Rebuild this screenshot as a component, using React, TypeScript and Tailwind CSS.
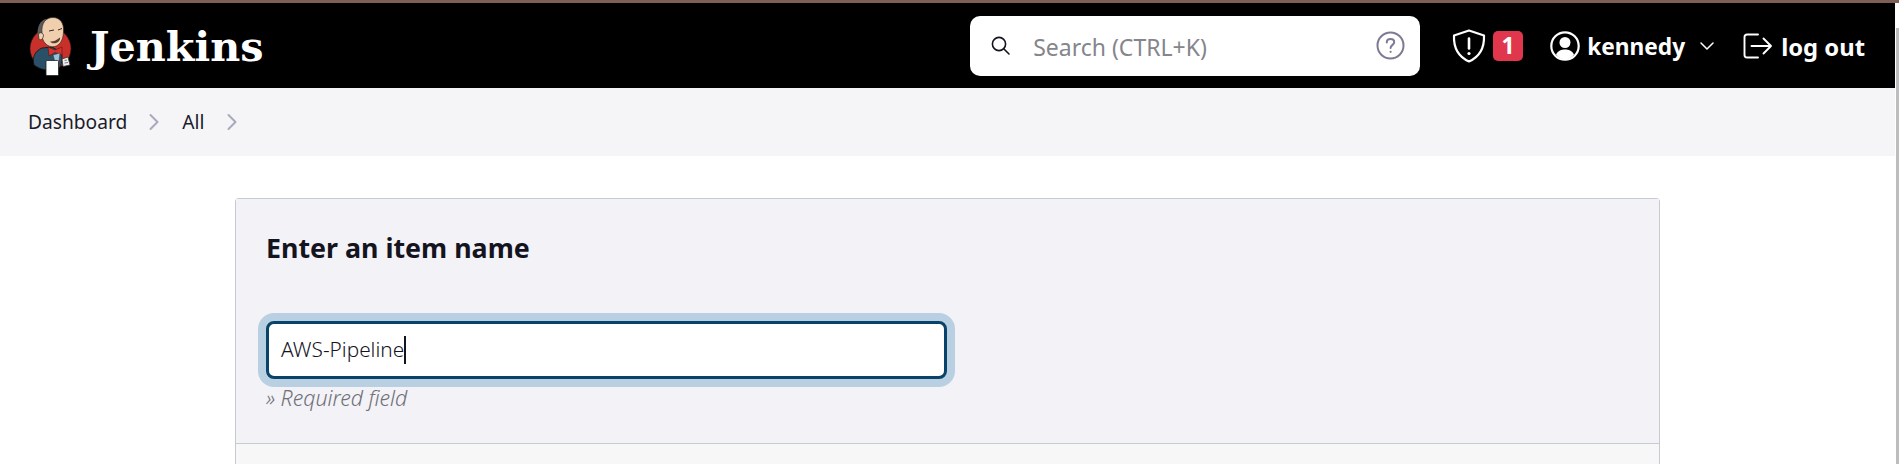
import React from "react";

const Logo = () => (
  <svg width="46" height="66" viewBox="0 0 46 66" className="shrink-0">
    <circle cx="22.5" cy="35.5" r="20.5" fill="#c9302a" stroke="#2a1a18" strokeWidth="0.6" />
    <path d="M6 52 C4 44 7 38 14 35 L24 34 L33 39 C35 44 34 50 32 54 C24 59 14 58 6 52 Z" fill="#2a5068" stroke="#111" strokeWidth="0.8" />
    <path d="M10 24 C8 14 13 6 19 6 C15 11 15 20 15 26 C13 27 11 26 10 24 Z" fill="#5b5b5e" />
    <path d="M14 20 C13 10 18 4.5 25 4.5 C32 4.5 36 10 35.5 18 C35.4 24 34 29 30 32 C26 35 20 34 17 30 C15 28 14 25 14 20 Z" fill="#f0cfae" stroke="#3a2a22" strokeWidth="0.7" />
    <path d="M10.5 22 C10.5 19 14.5 19 15.5 22 C15.5 26 12.5 28 11 26 Z" fill="#f0cfae" stroke="#3a2a22" strokeWidth="0.7" />
    <path d="M21 18 L26 17 M30 17 L34 15.5" stroke="#3a2a22" strokeWidth="1" fill="none" />
    <path d="M22 28.5 C25 29 29 27 32 24.5 C32.5 27 30 30 27 30.2 C25 30.5 23 30 22 28.5 Z" fill="#5a3a2c" />
    <path d="M20 34 L27 37 L34 34 L34 42 L27 39.5 L21 43 Z" fill="#d8322c" stroke="#3a1512" strokeWidth="0.5" />
    <path d="M25 42 L32 40 L31 48 L27 49 Z" fill="#9ec1d4" stroke="#26323a" strokeWidth="0.5" />
    <rect x="18" y="47.5" width="12.5" height="15" rx="1" fill="#fff" stroke="#222" strokeWidth="0.8" />
    <path d="M34 46 L40 44 L42 52 L35 53.5 Z" fill="#f4efe9" stroke="#333" strokeWidth="0.8" />
    <path d="M36.5 47.5 L39 47 M36.5 50 L40 49.5" stroke="#557" strokeWidth="0.8" />
  </svg>
);

const SearchIcon = () => (
  <svg width="21" height="21" viewBox="0 0 21 21" fill="none" stroke="#14141f" strokeWidth="1.6" strokeLinecap="round">
    <circle cx="9" cy="9" r="6.6" />
    <path d="M14 14 L19 19" />
  </svg>
);

const HelpIcon = () => (
  <svg width="29" height="29" viewBox="0 0 29 29" fill="none" stroke="#7b7b96" strokeWidth="2">
    <circle cx="14.5" cy="14.5" r="13" />
    <path d="M10.8 11.4 C10.8 9.2 12.5 8 14.5 8 C16.6 8 18.2 9.3 18.2 11.2 C18.2 13.8 14.6 14 14.6 17" strokeLinecap="round" />
    <circle cx="14.6" cy="20.8" r="1.1" fill="#7b7b96" stroke="none" />
  </svg>
);

const ShieldIcon = () => (
  <svg width="34" height="34" viewBox="0 0 34 34" fill="none" stroke="#fff" strokeWidth="2.2" strokeLinejoin="round">
    <path d="M17 1.5 L32 6.5 C32.5 19 27 28 17 32.5 C7 28 1.5 19 2 6.5 Z" />
    <path d="M17 9.5 V19.5" strokeWidth="2.6" strokeLinecap="round" />
    <circle cx="17" cy="24.5" r="1.6" fill="#fff" stroke="none" />
  </svg>
);

const UserIcon = () => (
  <svg width="30" height="30" viewBox="0 0 30 30">
    <circle cx="15" cy="15" r="13.7" fill="none" stroke="#fff" strokeWidth="2.2" />
    <circle cx="15" cy="11.5" r="5.5" fill="#fff" />
    <path d="M6 23.5 C8 19.5 11.5 18.5 15 18.5 C18.5 18.5 22 19.5 24 23.5 C21.5 27 18 28.5 15 28.5 C12 28.5 8.5 27 6 23.5 Z" fill="#fff" />
  </svg>
);

const ChevronDown = () => (
  <svg width="16" height="10" viewBox="0 0 16 10" fill="none" stroke="#fff" strokeWidth="1.5" strokeLinecap="round" strokeLinejoin="round">
    <path d="M2 2 L8 8 L14 2" />
  </svg>
);

const LogoutIcon = () => (
  <svg width="30" height="26" viewBox="0 0 30 26" fill="none" stroke="#fff" strokeWidth="1.9" strokeLinecap="round" strokeLinejoin="round">
    <path d="M15 1.5 H4 C2.5 1.5 1.5 2.5 1.5 4 V22 C1.5 23.5 2.5 24.5 4 24.5 H15" />
    <path d="M8.5 13 H28 M20.5 5.5 L28 13 L20.5 20.5" />
  </svg>
);

const Crumb = () => (
  <svg width="12" height="18" viewBox="0 0 12 18" fill="none" stroke="#a9a9bd" strokeWidth="2" strokeLinecap="round" strokeLinejoin="round">
    <path d="M2.5 2 L9.5 9 L2.5 16" />
  </svg>
);

export default function App() {
  return (
    <div className="relative h-[464px] w-full overflow-hidden bg-white font-['Noto_Sans',sans-serif] text-[#14141f]">
      <div className="h-[3px] bg-[#7f5f55]" />
      <header className="flex h-[85px] items-center bg-black pr-[34px] pl-[28px] text-white">
        <Logo />
        <span className="ml-[16px] pt-[2px] font-['DejaVu_Serif',serif] text-[41.3px] leading-none font-bold">Jenkins</span>
        <div className="ml-auto flex h-[60px] w-[450px] items-center rounded-[10px] bg-white pr-[15px] pl-[20px]">
          <SearchIcon />
          <span className="ml-[22px] pt-[3px] text-[23px] text-[#85858c]">Search (CTRL+K)</span>
          <span className="ml-auto flex"><HelpIcon /></span>
        </div>
        <div className="ml-[32px] flex items-center">
          <ShieldIcon />
          <span className="ml-[7px] flex h-[30px] w-[30px] items-center justify-center rounded-[5px] bg-[#e0374c] text-[23px] font-bold">1</span>
          <span className="ml-[27px] flex"><UserIcon /></span>
          <span className="ml-[7px] pt-[4px] text-[22.7px] leading-none font-bold">kennedy</span>
          <span className="ml-[14px] flex"><ChevronDown /></span>
          <span className="ml-[28px] flex"><LogoutIcon /></span>
          <span className="ml-[8px] pt-[4px] text-[23.8px] leading-none font-bold">log out</span>
        </div>
      </header>
      <nav className="flex h-[68px] items-center bg-[#f5f5f8] pl-[28px] text-[19.2px] text-[#1b1b29]">
        <span>Dashboard</span>
        <span className="ml-[21px] flex"><Crumb /></span>
        <span className="ml-[22px]">All</span>
        <span className="ml-[21px] flex"><Crumb /></span>
      </nav>
      <main className="pt-[42px] pr-[239px] pl-[235px]">
        <section className="rounded-t-[4px] border border-b-0 border-[#c3ccd1]">
          <div className="h-[245px] border-b border-[#c3ccd1] bg-[#f2f2f7] px-[30px] pt-[29px]">
            <h2 className="text-[26.8px] leading-[40px] font-bold">Enter an item name</h2>
            <div className="mt-[53px] flex h-[58px] w-[681px] items-center rounded-[8px] border-[3px] border-[#0a4369] bg-white pl-[12px] text-[20.8px] font-light shadow-[0_0_0_8px_#b9d0e2]">
              <span>AWS-Pipeline</span>
              <span className="h-[28px] w-[2px] bg-[#14141f]" />
            </div>
            <p className="mt-[5px] text-[21.3px] leading-[28px] font-light text-[#6f6f76] italic">» Required field</p>
          </div>
          <div className="h-[30px] bg-[#f7f7f7]" />
        </section>
      </main>
      <div className="absolute top-[3px] right-0 flex h-[461px] w-[4px] flex-col items-end bg-white pt-[25px]">
        <div className="h-full w-[3px] bg-[#bdbdbd]" />
      </div>
    </div>
  );
}
